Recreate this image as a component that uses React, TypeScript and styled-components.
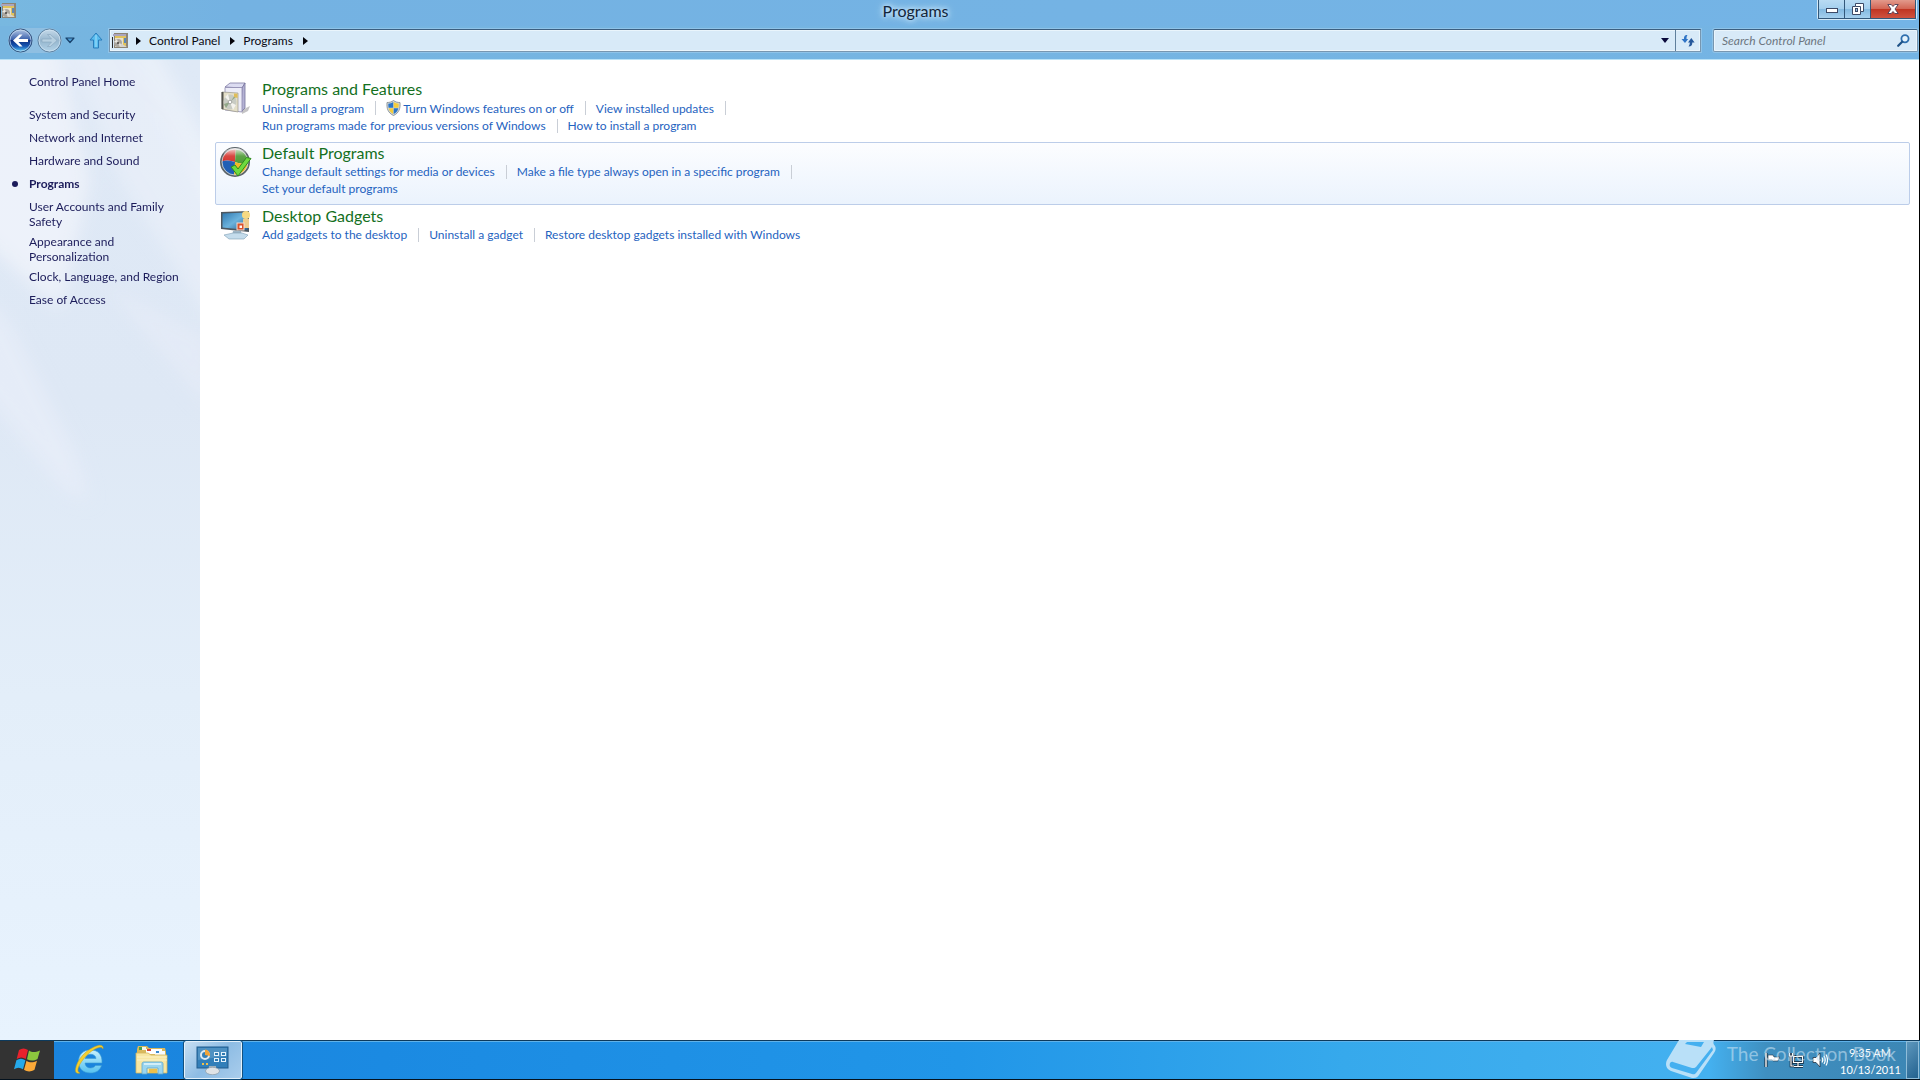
import React from "react";
import styled, { createGlobalStyle, css } from "styled-components";

const GlobalStyle = createGlobalStyle`
  *, *::before, *::after { box-sizing: border-box; }
  html, body, #root { height: 100%; }
  body {
    margin: 0;
    background: #000;
    overflow: hidden;
    font: 12px/15px Lato, "Open Sans", sans-serif;
  }
  button, input { font: inherit; }
  button { border: 0; padding: 0; background: none; }
  a { color: inherit; text-decoration: none; }
  h2, ul { margin: 0; padding: 0; font-weight: 400; list-style: none; }
  svg { display: block; flex: none; }
`;

const Desktop = styled.div`
  height: 100vh;
  display: flex;
  flex-direction: column;
`;

const Window = styled.div`
  flex: 1;
  min-height: 0;
  margin-right: 1px;
  display: flex;
  flex-direction: column;
  background: #74b4e4;
`;

const TitleBar = styled.header`
  height: 26px;
  display: grid;
  grid-template-columns: 100px 1fr 100px;
  align-items: start;
  background: linear-gradient(90deg, #78b8e0, #74b2e2 12%, #74b4e6);
`;

const TitleIcon = styled.div`
  padding-top: 3px;
`;

const Title = styled.div`
  justify-self: center;
  margin-right: 88px;
  padding: 0 6px;
  font-size: 16px;
  line-height: 21px;
  color: #12253a;
  text-shadow: 0 0 6px #d5ecfb, 0 0 10px #c5e3f8, 0 0 4px #c5e3f8;
`;

const Controls = styled.div`
  display: flex;
  justify-self: end;
  margin-right: 2px;
  height: 20px;
  border: 1px solid #d4e9f7;
  border-top: 0;
  border-radius: 0 0 3px 3px;
`;

const ControlButton = styled.button<{ $width: number; $danger?: boolean }>`
  width: ${(p) => p.$width}px;
  display: grid;
  place-items: center;
  border: 1px solid #33587a;
  border-top: 0;
  background: ${(p) =>
    p.$danger
      ? "linear-gradient(#e29a8c, #d26453 50%, #c03522 52%, #cf5340)"
      : "linear-gradient(#b9dbf3, #a3cfee 50%, #83b9e0 52%, #a5d0ee)"};
  & + & { border-left-width: 0; }
`;

const NavBar = styled.nav`
  height: 34px;
  display: flex;
  align-items: center;
  padding: 0 1px 4px 8px;
  border-bottom: 1px solid #b9e2f7;
  background: linear-gradient(90deg, #76b5e0, #74b4e4);
`;

const History = styled.div`
  display: flex;
  align-items: center;
  gap: 3px;
  width: 81px;
`;

const HistoryPair = styled.div`
  display: flex;
  gap: 4px;
  border-radius: 13px;
  background: #8fbfe2;
`;

const fieldFrame = css`
  height: 23px;
  display: flex;
  align-items: center;
  border: 1px solid #7796b0;
  border-top-color: #3c5f80;
  background: #d8eaf8;
  box-shadow: inset 0 0 0 1px #eaf5fc, 0 0 0 1px #8fc3e8;
`;

const AddressBar = styled.div`
  ${fieldFrame}
  flex: 1;
  margin-left: 6px;
  padding-left: 2px;
  color: #0b0b14;
`;

const CrumbList = styled.ul`
  flex: 1;
  display: flex;
  align-items: center;
  gap: 8px;
  padding-left: 8px;
`;

const Crumb = styled.li`
  display: flex;
  align-items: center;
  gap: 10px;
`;

const AddressButton = styled.button<{ $width: number; $divided?: boolean }>`
  width: ${(p) => p.$width}px;
  height: 21px;
  display: grid;
  place-items: center;
  ${(p) => p.$divided && css`border-left: 1px solid #5f7f9c;`}
`;

const SearchBox = styled.label`
  ${fieldFrame}
  width: 205px;
  margin-left: 12px;
  padding: 0 7px 0 8px;
  border-radius: 2px;
`;

const SearchInput = styled.input`
  flex: 1;
  min-width: 0;
  border: 0;
  padding: 0;
  outline: 0;
  background: none;
  font-style: italic;
  &::placeholder { color: #6c7680; opacity: 1; }
`;

const Body = styled.div`
  flex: 1;
  min-height: 0;
  display: flex;
`;

const Sidebar = styled.aside`
  position: relative;
  width: 200px;
  padding: 14px 10px 0 9px;
  overflow: hidden;
  color: #1c1c5a;
  background: linear-gradient(#dfe9f6, #dee8f5 35%, #e3eef9 65%, #e8f3fe);
`;

const Glow = styled.div`
  position: absolute;
  inset: 0;
`;

const SideList = styled.ul`
  position: relative;
  display: flex;
  flex-direction: column;
  gap: 5px;
`;

const SideItem = styled.li<{ $current?: boolean; $home?: boolean }>`
  min-height: ${(p) => (p.$home ? 28 : 18)}px;
  display: grid;
  grid-template-columns: 20px 1fr;
  font-weight: ${(p) => (p.$current ? 700 : 400)};
`;

const Bullet = styled.span`
  grid-column: 1;
  width: 6px;
  height: 6px;
  margin: 5px 0 0 3px;
  border-radius: 50%;
  background: #1c1c5a;
`;

const SideLink = styled.a`
  grid-column: 2;
`;

const Main = styled.main`
  flex: 1;
  padding: 18px 9px 0 15px;
  background: #fff;
`;

const Category = styled.section<{ $active?: boolean }>`
  display: flex;
  gap: 10px;
  padding: 0 0 7px 4px;
  border: 1px solid ${(p) => (p.$active ? "#bccde9" : "transparent")};
  border-radius: 2px;
  background: ${(p) => (p.$active ? "linear-gradient(#fcfdff, #ebf3fd)" : "none")};
`;

const CategoryIcon = styled.div`
  padding-top: 3px;
`;

const CategoryTitle = styled.h2`
  padding-bottom: 1px;
  font-size: 16px;
  line-height: 19px;
  color: #14701e;
`;

const TaskList = styled.ul`
  display: flex;
  flex-wrap: wrap;
  max-width: 600px;
  color: #1f63c0;
`;

const Task = styled.li`
  display: flex;
  align-items: center;
  line-height: 17px;
  &:not(:last-child)::after {
    content: "";
    height: 14px;
    margin: 0 10px 0 11px;
    border-left: 1px solid #c9ced6;
  }
`;

const TaskLink = styled.a<{ $shield?: boolean }>`
  display: flex;
  align-items: center;
  gap: 2px;
  min-height: ${(p) => (p.$shield ? 18 : 17)}px;
`;

const Taskbar = styled.footer`
  height: 40px;
  display: flex;
  border-top: 1px solid #0d3a5c;
  border-bottom: 1px solid #04121e;
  box-shadow: inset 0 1px 0 #5fb2ea;
  background: linear-gradient(90deg, #1a82dc, #1b8ae2 20%, #2196e8 50%, #36a9ec 70%, #44b1f0 89%, #3f8fc0 92%, #3c86b4);
`;

const TaskbarButton = styled.button<{ $width: number; $kind?: "start" | "active" }>`
  width: ${(p) => p.$width}px;
  display: grid;
  place-items: center;
  ${(p) => p.$kind === "start" && css`background: #333;`}
  ${(p) =>
    p.$kind === "active" &&
    css`
      margin-left: 4px;
      border: 1px solid #e3f1fb;
      border-radius: 2px;
      outline: 1px solid #12507f;
      background: linear-gradient(135deg, #c6def2, #8dbce4 50%, #a9cdec);
    `}
`;

const Tray = styled.div`
  margin-left: auto;
  display: flex;
  align-items: center;
  color: #fff;
`;

const TrayIcons = styled.div`
  display: flex;
  align-items: center;
  gap: 8px;
  margin-right: 12px;
`;

const Clock = styled.div`
  width: 60px;
  margin-right: 6px;
  padding-top: 2px;
  text-align: center;
  font-size: 11px;
  line-height: 17px;
  white-space: nowrap;
`;

const ShowDesktop = styled.button`
  width: 13px;
  height: 38px;
  margin-right: 1px;
  border: 1px solid #8fbdd9;
  background: linear-gradient(135deg, #5d97bd, #23628f);
`;

const Watermark = styled.div`
  position: absolute;
  right: 24px;
  bottom: 0;
  display: flex;
  gap: 10px;
  font-size: 19px;
  line-height: 28px;
  color: rgba(200, 226, 243, 0.6);
  pointer-events: none;
`;

const PanelIcon = () => (
  <svg width="16" height="16" viewBox="0 0 16 16">
    <rect x="2" y="0" width="14" height="15" fill="#8c8576" />
    <path d="M1 1h13v2H1z" fill="#aaa5bd" />
    <rect x="3" y="3" width="11" height="11" fill="#e0c35e" />
    <rect x="3" y="5" width="8" height="9" fill="#e9e2cb" />
    <path d="M0 4h1v11H0z" fill="#2d2b2a" />
    <circle cx="6" cy="10" r="4" fill="#aaa69f" />
    <path d="M2 9l4 1-1-4z" fill="#ebe8e0" />
    <path d="M6 10l4 1-2 3z" fill="#e3e0d8" />
    <circle cx="6" cy="10" r="1" fill="#46423e" />
    <path d="M12 5h2v5h-2z" fill="#5d87b7" />
    <path d="M10 11l5 3H9z" fill="#d8d4cd" />
  </svg>
);

const SidebarGlow = () => (
  <svg width="200" height="520" viewBox="0 0 200 520">
    <filter id="soft" x="-50%" y="-50%" width="200%" height="200%">
      <feGaussianBlur stdDeviation="9" />
    </filter>
    <g filter="url(#soft)">
      <path d="M-40-30h95L90 120 60 250-40 160z" fill="#f1f4fb" opacity=".75" />
      <path d="M60-30h60l110 190v130L120 120z" fill="#e9eff9" opacity=".7" />
      <path d="M130-20h20l70 120v70z" fill="#f2f5fb" opacity=".6" />
      <path d="M-20 230L10 262l65 130 15 50-25-10L-20 330z" fill="#e8eef9" opacity=".7" />
      <path d="M100 220l110 60v70z" fill="#e7edf8" opacity=".6" />
    </g>
  </svg>
);

const BackIcon = () => (
  <svg width="25" height="25" viewBox="0 0 25 25">
    <defs>
      <linearGradient id="back" x1="0" y1="0" x2="0" y2="1">
        <stop offset="0" stopColor="#b5c9e6" />
        <stop offset=".45" stopColor="#3e63ad" />
        <stop offset=".5" stopColor="#0c2f83" />
        <stop offset=".75" stopColor="#1658b4" />
        <stop offset="1" stopColor="#5ed3fb" />
      </linearGradient>
    </defs>
    <circle cx="12.5" cy="12.5" r="11.5" fill="url(#back)" stroke="#33527c" />
    <circle cx="12.5" cy="12.5" r="10.5" fill="none" stroke="#c9def2" strokeOpacity=".7" />
    <path d="M5 12.500l6.500-6h3l-4 4.500H20v3h-9.500l4 4.500h-3z" fill="#fff" />
  </svg>
);

const ForwardIcon = () => (
  <svg width="25" height="25" viewBox="0 0 25 25">
    <defs>
      <linearGradient id="fwd" x1="0" y1="0" x2="0" y2="1">
        <stop offset="0" stopColor="#c6daea" />
        <stop offset=".5" stopColor="#96b6ce" />
        <stop offset="1" stopColor="#b3d4e9" />
      </linearGradient>
    </defs>
    <circle cx="12.5" cy="12.5" r="11.5" fill="url(#fwd)" stroke="#5b7f9f" />
    <circle cx="12.5" cy="12.5" r="10.5" fill="none" stroke="#d3e6f3" strokeOpacity=".7" />
    <path d="M20 12.500l-6.500-6h-3l4 4.500H5v3h9.500l-4 4.500h3z" fill="#b7d0e1" stroke="#86a5bd" strokeWidth=".6" />
  </svg>
);

const RecentIcon = () => (
  <svg width="10" height="7" viewBox="0 0 10 7">
    <path d="M1 1h8L5 5.500z" fill="#4e9fd8" stroke="#17406a" strokeWidth="1.2" strokeLinejoin="round" />
  </svg>
);

const UpIcon = () => (
  <svg width="14" height="17" viewBox="0 0 14 17">
    <path d="M7 1l6 7H9.500v8h-5V8H1z" fill="#58bdf0" stroke="#2a7dbb" strokeLinejoin="round" />
    <path d="M7 3v12" stroke="#a4dff9" />
  </svg>
);

const CrumbArrow = () => (
  <svg width="5" height="8" viewBox="0 0 5 8">
    <path d="M0 0l5 4-5 4z" fill="#05050c" />
  </svg>
);

const DropArrow = () => (
  <svg width="8" height="5" viewBox="0 0 8 5">
    <path d="M0 0h8L4 5z" fill="#0a0a3c" />
  </svg>
);

const RefreshIcon = () => (
  <svg width="14" height="13" viewBox="0 0 14 13">
    <path d="M6.500 1C3.500 1 3 2.500 3 5H.5L4 9l3.200-4H5.500c0-1.500 0-2.500 1-4z" fill="#2f74c6" />
    <path d="M7.500 12.500c3 0 3.800-1.500 3.800-4h2.300L10.300 4 7 8.500h1.800c0 1.500-.3 2.500-1.300 4z" fill="#25589c" />
  </svg>
);

const SearchIcon = () => (
  <svg width="13" height="13" viewBox="0 0 13 13">
    <circle cx="8" cy="4.8" r="3.6" fill="#e5f3fc" stroke="#2f6fae" strokeWidth="1.8" />
    <path d="M5.200 7.700L1.200 11.800" stroke="#1f5288" strokeWidth="2.2" strokeLinecap="round" />
  </svg>
);

const MinimizeIcon = () => (
  <svg width="12" height="10" viewBox="0 0 12 10">
    <rect x=".5" y="4.5" width="11" height="4" fill="#fff" stroke="#3c4a66" />
  </svg>
);

const RestoreIcon = () => (
  <svg width="12" height="12" viewBox="0 0 12 12">
    <path d="M3.500.5h8v8h-3v3h-8v-8h3z" fill="#fff" stroke="#3c4a66" />
    <path d="M3.500 3.500h5v5" fill="none" stroke="#3c4a66" />
    <rect x="3.5" y="5.5" width="2" height="3" fill="#8fbfe4" stroke="#3c4a66" />
  </svg>
);

const CloseIcon = () => (
  <svg width="12" height="10" viewBox="0 0 12 10">
    <path d="M.8.500h3.400L6 2.500 7.800.5h3.400L8 5l3.200 4.500H7.800L6 7.500 4.200 9.500H.8L4 5z" fill="#fff" stroke="#4d3a52" strokeWidth=".9" />
  </svg>
);

const ProgramsIcon = () => (
  <svg width="32" height="32" viewBox="0 0 32 32">
    <path d="M22 28l8-4-2 5-6 3z" fill="#8b8a8c" opacity=".5" />
    <path d="M5 5l5-4h15l-3 5z" fill="#dcdcf1" stroke="#7f7ba3" strokeWidth=".8" />
    <path d="M22 6l3-5v25l-4 4z" fill="#b4b2d4" stroke="#77739c" strokeWidth=".8" />
    <path d="M5 5.500h17V30l-17-2z" fill="#ececf7" stroke="#8d89ae" strokeWidth=".8" />
    <path d="M2 10l16 1v19L2 27z" fill="#e4dfc8" stroke="#9b9a8c" strokeWidth=".7" />
    <path d="M1.500 10v17l2 .5V10z" fill="#54544e" />
    <ellipse cx="10" cy="20" rx="6.5" ry="7.5" fill="#c8cbc3" />
    <path d="M10 20L5 15l3-3zM10 20l6 3-3 5z" fill="#f4f3ee" />
    <path d="M10 20l-6 2 2 4zM11 19l5-4-1-2z" fill="#91a788" />
    <circle cx="10" cy="20" r="1.8" fill="#fff" stroke="#8b8d88" strokeWidth=".7" />
    <path d="M14 11.500l3.500.3V16l-3.500-1z" fill="#e0bd59" />
  </svg>
);

const DefaultsIcon = () => (
  <svg width="32" height="32" viewBox="0 0 32 32">
    <defs>
      <linearGradient id="gloss" x1="0" y1="0" x2="0" y2="1">
        <stop offset="0" stopColor="#fff" stopOpacity=".85" />
        <stop offset=".5" stopColor="#fff" stopOpacity=".1" />
        <stop offset="1" stopColor="#fff" stopOpacity="0" />
      </linearGradient>
      <clipPath id="ball"><circle cx="15" cy="16" r="13.5" /></clipPath>
    </defs>
    <g clipPath="url(#ball)">
      <path d="M0 0h16l-1 16c-5-2-10-2-15 0z" fill="#d4332c" />
      <path d="M16 0h16v16c-6 2-11 2-17 0z" fill="#4d9a35" />
      <path d="M0 16c5-2 10-2 15 0l-1 16H0z" fill="#205fb5" />
      <path d="M15 16c6 2 11 2 17 0v16H14z" fill="#f3b827" />
    </g>
    <circle cx="15" cy="16" r="14" fill="none" stroke="#5c6469" strokeWidth="2" />
    <circle cx="15" cy="16" r="13" fill="none" stroke="#dce1e1" strokeWidth=".8" />
    <ellipse cx="15" cy="10" rx="11.5" ry="8" fill="url(#gloss)" />
    <path d="M11 21l4-2 3 4 8.500-11.500 4.500 1L18 30z" fill="#6edb3f" stroke="#2e8a1e" strokeWidth="1" strokeLinejoin="round" />
  </svg>
);

const GadgetsIcon = () => (
  <svg width="32" height="32" viewBox="0 0 32 32">
    <defs>
      <linearGradient id="screen" x1="0" y1="0" x2="1" y2="1">
        <stop offset="0" stopColor="#2f79b1" />
        <stop offset=".5" stopColor="#6cb3dd" />
        <stop offset="1" stopColor="#235f96" />
      </linearGradient>
    </defs>
    <path d="M13 22h8l1 5H12z" fill="#9fb6c6" />
    <path d="M4 26l9-2h9l6 2-4 4H9z" fill="#c4dcec" stroke="#7d9db3" strokeWidth=".6" />
    <path d="M1 3l28-1v21L1 20z" fill="#4d5861" />
    <path d="M2.500 4.500l25-1V21l-25-2.500z" fill="url(#screen)" />
    <circle cx="26" cy="6" r="4" fill="#f5d983" />
    <path d="M23 10h6v9h-6z" fill="#eecb8e" />
    <rect x="17" y="14" width="7" height="7" fill="#d9512c" stroke="#f4ddd2" />
    <rect x="19.5" y="16.5" width="2.5" height="2.5" fill="#fff" />
  </svg>
);

const ShieldIcon = () => (
  <svg width="15" height="16" viewBox="0 0 15 16">
    <path d="M7.500.5C5.500 2 3.500 2.500 1 2.500c-.5 6 1 10.500 6.500 13 5.500-2.500 7-7 6.500-13-2.500 0-4.500-.5-6.500-2z" fill="#d3d8da" stroke="#7c868c" strokeWidth=".8" />
    <path d="M7.300 2C5.500 3.200 4 3.600 2.300 3.700c0 1.500 0 2.800.3 4.100h4.700z" fill="#2a75c9" />
    <path d="M7.700 2c1.800 1.200 3.300 1.600 5 1.700 0 1.500 0 2.800-.3 4.100H7.700z" fill="#f4cd3c" />
    <path d="M2.700 8.200h4.600V14C4.800 12.800 3.300 11 2.700 8.200z" fill="#f4cd3c" />
    <path d="M12.300 8.200H7.700V14c2.500-1.200 4-3 4.600-5.800z" fill="#2a75c9" />
  </svg>
);

const StartIcon = () => (
  <svg width="28" height="26" viewBox="0 0 28 26">
    <path d="M6 3c3-2 6-2 9 0l-2.300 9c-3-2-6-2-9 0z" fill="#e8222c" />
    <path d="M16 3.500c3 2 6 2 11 0L24.500 12c-4 2.200-7 2-10.500.3z" fill="#8cc63e" />
    <path d="M3.400 13.200c3-2 6-2 9 0l-2.400 9c-3-2-6-2-9 0z" fill="#25a9ea" />
    <path d="M13.500 13.800c3 2 6.500 2 10.500 0l-2.500 9c-4 2.200-7 2-10.500 0z" fill="#fba938" />
  </svg>
);

const BrowserIcon = () => (
  <svg width="32" height="32" viewBox="0 0 32 32">
    <defs>
      <linearGradient id="ie" x1="0" y1="0" x2="0" y2="1">
        <stop offset="0" stopColor="#c6f0fd" />
        <stop offset="1" stopColor="#55c1f0" />
      </linearGradient>
    </defs>
    <path d="M29 19H12c.3 3.500 2.500 5 5.500 5 2.300 0 4-1 5-2.500h6C27 26.500 23 29 17.500 29 10 29 5.500 24.500 5.500 17.500S10 6 17.500 6 29.500 10.500 29 19zM12 14.500h11c-.2-2.600-2.300-4.200-5.300-4.200-3.200 0-5.200 1.500-5.700 4.200z" fill="url(#ie)" stroke="#3a9cd4" strokeWidth=".6" />
    <path d="M30 5c1-4-3-5-9-2C12 7 4 16 2.500 25c-.5 4 1.500 5 4.500 4C4 28 4.500 24.500 7 20 11.500 12.500 20 4.500 26 3.500c2.500-.5 3.500.3 4 1.500z" fill="#f3cf30" stroke="#c59c1a" strokeWidth=".5" />
  </svg>
);

const FolderIcon = () => (
  <svg width="34" height="30" viewBox="0 0 34 30">
    <path d="M2 4l1-3h9l2 2h16l1 4v20H2z" fill="#d9b85c" />
    <path d="M4 2h7v3H4z" fill="#f3f7ef" />
    <path d="M4 2h3v3H4z" fill="#48a24f" />
    <path d="M11 4h16v5H11z" fill="#fff" />
    <path d="M12 4h4v2h-4z" fill="#d64133" />
    <path d="M20 6h10v4H20z" fill="#f7fbff" />
    <path d="M21 6h3v2h-3z" fill="#3987cf" />
    <path d="M1 8h12l3 2h16v18H1z" fill="#f7e6a2" stroke="#d3b560" strokeWidth=".8" />
    <path d="M2 12h30M2 15h30" stroke="#fbf2c8" />
    <path d="M7 29V19c0-1.500 1-2 2-2h17c1.500 0 2 .8 2 2v10h-5v-6H12v6z" fill="#9bd5ef" stroke="#5ea7cf" strokeWidth=".8" />
    <path d="M9 19h17" stroke="#e5f6fd" strokeWidth="1.5" />
    <path d="M14 24h8v4h-8z" fill="#ecbf4a" />
  </svg>
);

const ControlPanelIcon = () => (
  <svg width="34" height="30" viewBox="0 0 34 30">
    <rect x="1" y="2" width="31" height="21" fill="#327fb9" stroke="#215d8e" />
    <path d="M2 3h29v8L2 15z" fill="#fff" opacity=".14" />
    <circle cx="9" cy="10" r="4" fill="#327fb9" stroke="#dfeaf2" strokeWidth="2" />
    <path d="M9 10V4.500A5.500 5.500 0 0 1 14 11z" fill="#f0a43a" />
    <g fill="#2f7ab2" stroke="#e4f2fb">
      <rect x="18.5" y="7.5" width="4" height="3" />
      <rect x="25.5" y="7.5" width="4" height="3" />
      <rect x="18.5" y="13.5" width="4" height="3" />
      <rect x="25.5" y="13.5" width="4" height="3" />
    </g>
    <path d="M6 18h2v2H6zM10 18h2v2h-2z" fill="#f0c04b" />
    <path d="M13 21h7v4h-7z" fill="#9fb0bc" />
    <ellipse cx="16.5" cy="26" rx="7" ry="3.7" fill="#dfe3e6" stroke="#8e9ba5" strokeWidth=".7" />
  </svg>
);

const FlagIcon = () => (
  <svg width="16" height="16" viewBox="0 0 16 16">
    <path d="M2 1v14" stroke="#123" strokeWidth="3" />
    <path d="M2 1v14" stroke="#fff" strokeWidth="1.4" />
    <path d="M4 3h5l1 2h5.500L14 9H9L8 8H4z" fill="#fff" stroke="#234" strokeWidth=".6" />
  </svg>
);

const NetworkIcon = () => (
  <svg width="16" height="16" viewBox="0 0 16 16">
    <path d="M5.500 4.500h9v6h-9zM10 11v3M6 14.500h9M1.500 1v3h3V1M3 4v10h3" fill="none" stroke="#123" strokeWidth="2.6" />
    <path d="M5.500 4.500h9v6h-9zM10 11v3M6 14.500h9M1.500 1v3h3V1M3 4v10h3" fill="none" stroke="#fff" strokeWidth="1.2" />
  </svg>
);

const VolumeIcon = () => (
  <svg width="16" height="16" viewBox="0 0 16 16">
    <path d="M1 5.500h3L8 1v14l-4-4.500H1z" fill="#fff" stroke="#234" strokeWidth=".8" />
    <path d="M10 5.500q1.500 2.500 0 5M12 4q2.500 4 0 8M14 2.500q3 5.500 0 11" fill="none" stroke="#fff" strokeWidth="1.2" />
  </svg>
);

const BookIcon = () => (
  <svg width="52" height="40" viewBox="0 0 52 40">
    <path d="M14 0h35c-1 2-1 4 1 6 1 2 1 4-1 7L34 35c-2 3-4 3-7 3L6 31c-5-2-6-7-4-11z" fill="#b9e0f8" />
    <path d="M5 23c-1 3 0 4 2 5l20 6c2 .6 3 0 4-1L48 10l-1-3-16 20c-1 1-2 1-4 1L8 22c-1-.4-2 0-3 1z" fill="#45b0f0" />
    <path d="M22 2h17l-3 5-16-3z" fill="#45b0f0" />
  </svg>
);

const sideLinks = [
  "Control Panel Home",
  "System and Security",
  "Network and Internet",
  "Hardware and Sound",
  "Programs",
  "User Accounts and Family Safety",
  "Appearance and Personalization",
  "Clock, Language, and Region",
  "Ease of Access",
];

type TaskDef = { label: string; shield?: boolean };

const categories: { title: string; Icon: React.FC; active?: boolean; tasks: TaskDef[] }[] = [
  {
    title: "Programs and Features",
    Icon: ProgramsIcon,
    tasks: [
      { label: "Uninstall a program" },
      { label: "Turn Windows features on or off", shield: true },
      { label: "View installed updates" },
      { label: "Run programs made for previous versions of Windows" },
      { label: "How to install a program" },
    ],
  },
  {
    title: "Default Programs",
    Icon: DefaultsIcon,
    active: true,
    tasks: [
      { label: "Change default settings for media or devices" },
      { label: "Make a file type always open in a specific program" },
      { label: "Set your default programs" },
    ],
  },
  {
    title: "Desktop Gadgets",
    Icon: GadgetsIcon,
    tasks: [
      { label: "Add gadgets to the desktop" },
      { label: "Uninstall a gadget" },
      { label: "Restore desktop gadgets installed with Windows" },
    ],
  },
];

export default function App() {
  return (
    <Desktop>
      <GlobalStyle />
      <Window>
        <TitleBar>
          <TitleIcon><PanelIcon /></TitleIcon>
          <Title>Programs</Title>
          <Controls>
            <ControlButton $width={27} aria-label="Minimize"><MinimizeIcon /></ControlButton>
            <ControlButton $width={26} aria-label="Restore"><RestoreIcon /></ControlButton>
            <ControlButton $width={45} $danger aria-label="Close"><CloseIcon /></ControlButton>
          </Controls>
        </TitleBar>
        <NavBar>
          <History>
            <HistoryPair>
              <button aria-label="Back"><BackIcon /></button>
              <button aria-label="Forward"><ForwardIcon /></button>
            </HistoryPair>
            <button aria-label="Recent pages"><RecentIcon /></button>
          </History>
          <button aria-label="Up"><UpIcon /></button>
          <AddressBar>
            <PanelIcon />
            <CrumbList>
              <li><CrumbArrow /></li>
              {["Control Panel", "Programs"].map((name) => (
                <Crumb key={name}>
                  <a href="#">{name}</a>
                  <CrumbArrow />
                </Crumb>
              ))}
            </CrumbList>
            <AddressButton $width={20} aria-label="Previous locations"><DropArrow /></AddressButton>
            <AddressButton $width={25} $divided aria-label="Refresh"><RefreshIcon /></AddressButton>
          </AddressBar>
          <SearchBox>
            <SearchInput type="text" placeholder="Search Control Panel" aria-label="Search Control Panel" />
            <SearchIcon />
          </SearchBox>
        </NavBar>
        <Body>
          <Sidebar>
            <Glow><SidebarGlow /></Glow>
            <SideList>
              {sideLinks.map((label, i) => (
                <SideItem key={label} $home={i === 0} $current={label === "Programs"}>
                  {label === "Programs" && <Bullet />}
                  <SideLink href="#">{label}</SideLink>
                </SideItem>
              ))}
            </SideList>
          </Sidebar>
          <Main>
            {categories.map(({ title, Icon, active, tasks }) => (
              <Category key={title} $active={active}>
                <CategoryIcon><Icon /></CategoryIcon>
                <div>
                  <CategoryTitle><a href="#">{title}</a></CategoryTitle>
                  <TaskList>
                    {tasks.map((t) => (
                      <Task key={t.label}>
                        <TaskLink href="#" $shield={t.shield}>
                          {t.shield && <ShieldIcon />}
                          {t.label}
                        </TaskLink>
                      </Task>
                    ))}
                  </TaskList>
                </div>
              </Category>
            ))}
          </Main>
        </Body>
      </Window>
      <Taskbar>
        <TaskbarButton $width={54} $kind="start" aria-label="Start"><StartIcon /></TaskbarButton>
        <TaskbarButton $width={70} aria-label="Internet Explorer"><BrowserIcon /></TaskbarButton>
        <TaskbarButton $width={56} aria-label="Windows Explorer"><FolderIcon /></TaskbarButton>
        <TaskbarButton $width={58} $kind="active" aria-label="Control Panel"><ControlPanelIcon /></TaskbarButton>
        <Tray>
          <TrayIcons>
            <FlagIcon />
            <NetworkIcon />
            <VolumeIcon />
          </TrayIcons>
          <Clock>
            <div>9:35 AM</div>
            <div>10/13/2011</div>
          </Clock>
          <ShowDesktop aria-label="Show desktop" />
        </Tray>
      </Taskbar>
      <Watermark>
        <BookIcon />
        <span>The Collection Book</span>
      </Watermark>
    </Desktop>
  );
}
